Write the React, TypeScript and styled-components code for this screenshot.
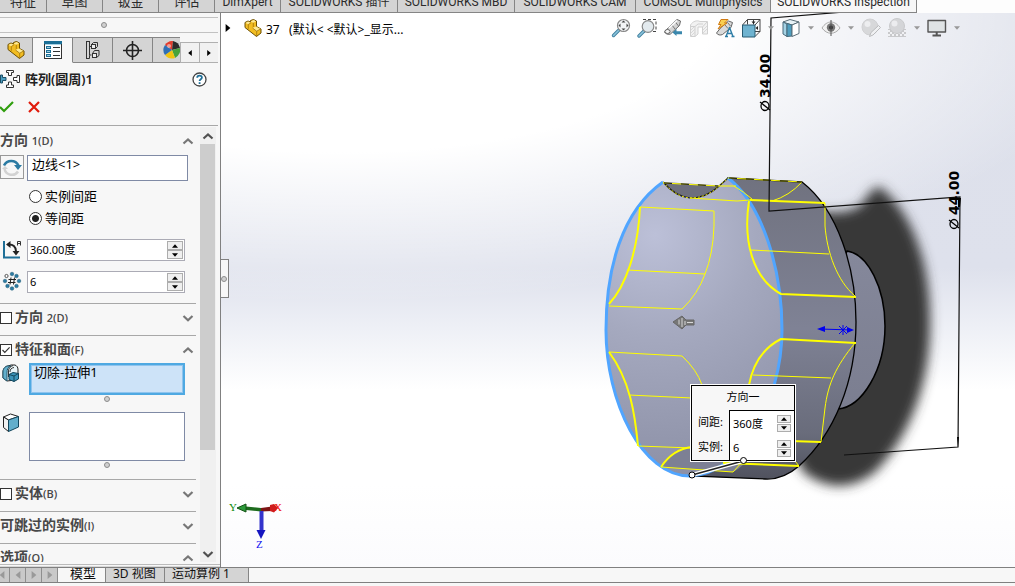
import React, { useState } from "react";
import styled, { createGlobalStyle, css } from "styled-components";

const GlobalStyle = createGlobalStyle`
  *, *::before, *::after { box-sizing: border-box; }
  body {
    margin: 0;
    background: #f7f7f7;
    color: #1a1a1a;
    font-family: "Noto Sans", "Noto Sans CJK SC", sans-serif;
    font-size: 13px;
  }
  button, input { font: inherit; color: inherit; }
  button { margin: 0; padding: 0; border: 0; background: none; cursor: pointer; }
  ul { margin: 0; padding: 0; list-style: none; }
`;

const Shell = styled.div`
  display: flex;
  flex-direction: column;
  height: 100vh;
  overflow: hidden;
`;

/* ---------- command manager tabs ---------- */

const CommandTabs = styled.nav`
  position: relative;
  z-index: 2;
  display: flex;
  align-items: flex-end;
  flex: none;
  height: 13px;
  overflow: hidden;
  background: #fdfdfd;
`;

const CommandTab = styled.button<{ $width: number; $active?: boolean }>`
  flex: none;
  width: ${(p) => p.$width}px;
  height: 22px;
  border-right: 1px solid #858585;
  border-bottom: 1px solid #858585;
  background: ${(p) => (p.$active ? "#f7f7f7" : "#d4d4d4")};
  color: #2b2b2b;
  font-family: Roboto, "Noto Sans CJK SC", sans-serif;
  font-size: ${(p) => (p.$width < 60 ? 13 : 12)}px;
  line-height: 20px;
  white-space: nowrap;
`;

const Workspace = styled.div`
  display: flex;
  flex: 1;
  min-height: 0;
`;

/* ---------- property manager ---------- */

const Panel = styled.aside`
  display: flex;
  flex-direction: column;
  flex: none;
  width: 221px;
  border-right: 1px solid #808080;
  background: #f7f7f7;
`;

const PanelGrip = styled.div`
  display: flex;
  align-items: center;
  justify-content: center;
  flex: none;
  height: 16px;
  margin: 4px 2px 4px 0;
  padding-right: 10px;
  border-top: 1px solid #c2c2c2;
  border-bottom: 1px solid #c2c2c2;
`;

const Dot = styled.span`
  display: block;
  width: 6px;
  height: 6px;
  border: 1px solid #8c8c8c;
  border-radius: 50%;
  background: #d0d0d0;
`;

const PanelTabs = styled.div`
  display: flex;
  flex: none;
  height: 26px;
  margin-right: 2px;
  overflow: hidden;
`;

const PanelTab = styled.button<{ $active?: boolean; $width?: number }>`
  display: flex;
  align-items: center;
  justify-content: center;
  flex: none;
  width: ${(p) => p.$width ?? 40}px;
  border: solid #858585;
  border-width: 1px 1px 1px 0;
  background: #d4d4d4;
  ${(p) =>
    p.$active &&
    css`
      border-bottom-color: #f7f7f7;
      background: #f7f7f7;
    `}
`;

const CoveredTab = styled(PanelTab)`
  justify-content: flex-start;
  padding-left: 10px;
  border-right: 0;
  overflow: hidden;

  svg { flex: none; }
`;

const TabScroll = styled.div`
  display: flex;
  flex: 1;
  align-self: flex-end;
  height: 21px;
  border-top: 1px solid #b0b0b0;
`;

const TabScrollButton = styled.button`
  display: flex;
  align-items: center;
  justify-content: center;
  flex: 1;
  border: solid #b0b0b0;
  border-width: 0 0 1px 1px;
  background: #f1f1f1;
`;

const FeatureHeader = styled.header`
  display: flex;
  align-items: center;
  flex: none;
  height: 32px;
  padding-right: 13px;
`;

const FeatureTitle = styled.h1`
  flex: 1;
  margin: 0;
  padding-left: 5px;
  color: #222;
  font-size: 13px;
  font-weight: 600;
  line-height: 18px;
`;

const HelpButton = styled.button`
  display: flex;
`;

const ConfirmRow = styled.div`
  display: flex;
  align-items: center;
  flex: none;
  gap: 14px;
  height: 31px;
  padding-bottom: 6px;
  margin-right: 2px;
  border-bottom: 1px solid #a8a8a8;

  button { display: flex; }
`;

const PanelBody = styled.div`
  display: flex;
  flex: 1;
  gap: 4px;
  min-height: 0;
  padding: 1px 4px 0 0;
`;

const Sections = styled.div`
  display: flex;
  flex-direction: column;
  width: 196px;
  overflow: hidden;
`;

const Section = styled.section<{ $pad: number; $first?: boolean }>`
  flex: none;
  padding-bottom: ${(p) => p.$pad}px;
  border-top: ${(p) => (p.$first ? "0" : "1px solid #a8a8a8")};
`;

const SectionHead = styled.div`
  display: flex;
  align-items: center;
  height: 27px;
  padding-right: 2px;
`;

const SectionLabel = styled.label`
  display: flex;
  align-items: center;
  flex: 1;
  gap: 3px;
  color: #484848;
  font-size: 14px;
  font-weight: 600;
  line-height: 20px;
  white-space: pre;

  small {
    font-family: "Open Sans", sans-serif;
    font-size: 11px;
    font-weight: 600;
  }
`;

const ToggleButton = styled.button`
  display: flex;
`;

const CheckBox = styled.input`
  flex: none;
  width: 12px;
  height: 12px;
  margin: 0;
  appearance: none;
  border: 1px solid #333;
  background: #fff;

  &:checked {
    background: #fff
      url("data:image/svg+xml,%3Csvg xmlns='http://www.w3.org/2000/svg' viewBox='0 0 10 10'%3E%3Cpath d='M1.5 5l2.3 2.4L8.6 2.4' fill='none' stroke='%23333' stroke-width='1.2'/%3E%3C/svg%3E")
      center / 10px no-repeat;
  }
`;

const FieldRow = styled.div<{ $top?: number }>`
  display: flex;
  align-items: flex-start;
  margin-top: ${(p) => p.$top ?? 0}px;
`;

const RowIcon = styled.div<{ $width: number }>`
  flex: none;
  width: ${(p) => p.$width}px;
  padding-left: 2px;
  line-height: 0;
`;

const ReverseButton = styled.button`
  flex: none;
  width: 24px;
  height: 24px;
  margin-right: 3px;
  border: 1px solid #999;
  line-height: 0;
`;

const SelectionBox = styled.ul<{ $width: number; $height: number; $active?: boolean }>`
  width: ${(p) => p.$width}px;
  height: ${(p) => p.$height}px;
  padding: 0 4px;
  border: 1px solid #7f8aa5;
  background: #fff;
  color: #000;
  line-height: 16px;
  ${(p) =>
    p.$active &&
    css`
      padding: 0 3px;
      border: 2px solid #4fa9e2;
      background: #cde3f8;
      box-shadow: inset 0 0 0 1px #8fc4ee;
      line-height: 14px;
    `}
`;

const RadioLabel = styled.label`
  display: flex;
  align-items: center;
  gap: 3px;
  height: 22px;
  padding-left: 29px;
  color: #000;
  line-height: 20px;
`;

const Radio = styled.input`
  width: 13px;
  height: 13px;
  margin: 0;
  appearance: none;
  border: 1px solid #333;
  border-radius: 50%;
  background: #fff;

  &:checked { background: radial-gradient(circle, #222 0 3px, #fff 4px); }
`;

const SpinFrame = styled.div`
  display: flex;
  width: 158px;
  height: 22px;
  padding: 1px;
  border: 1px solid #ababb5;
  background: #fff;
`;

const SpinInput = styled.input`
  flex: 1;
  width: 0;
  min-width: 0;
  padding: 0 0 2px 1px;
  border: 0;
  outline: 0;
  background: none;
  color: #000;
  font-size: 11px;
`;

const SpinButtons = styled.span<{ $small?: boolean }>`
  display: flex;
  flex-direction: column;
  gap: ${(p) => (p.$small ? 1 : 0)}px;
  flex: none;
  width: ${(p) => (p.$small ? 14 : 16)}px;
`;

const SpinButton = styled.button`
  display: flex;
  align-items: center;
  justify-content: center;
  flex: 1;
  min-height: 0;
  border: 1px solid #adadad;
  background: #efefef;
`;

const BoxGrip = styled.div<{ $width: number }>`
  display: flex;
  justify-content: center;
  width: ${(p) => p.$width}px;
  padding-top: 1px;
`;

const ScrollBar = styled.div`
  display: flex;
  flex-direction: column;
  width: 16px;
  background: #f0f0f0;
`;

const ScrollArrow = styled.button`
  display: flex;
  align-items: center;
  justify-content: center;
  flex: none;
  height: 17px;
`;

const ScrollThumb = styled.div`
  flex: 306;
  width: 15px;
  background: #cdcdcd;
`;

const ScrollRest = styled.div`
  flex: 95;
`;

const PanelFoot = styled.div`
  flex: none;
  height: 3px;
  margin-top: 2px;
  border-top: 1px solid #bbb;
  border-bottom: 1px solid #d8d8d8;
`;

/* ---------- graphics area ---------- */

const Scene = styled.main`
  position: relative;
  flex: 1;
  min-width: 0;
  overflow: hidden;
  background:
    radial-gradient(ellipse 780px 290px at 15% 0, #fff 0, #fff 48%, rgba(255, 255, 255, 0) 100%),
    linear-gradient(to bottom, #dde0ea 0, #dee1ec 46%, #eef0f6 57%, #fff 68%, #fff 85%, #fbfbfd 100%);
`;

const Drawing = styled.svg`
  position: absolute;
  top: 0;
  left: 0;
  width: 794px;
  height: 554px;
  overflow: visible;
`;

const SceneBar = styled.div`
  position: relative;
  display: flex;
  justify-content: space-between;
  align-items: flex-start;
  padding: 4px 51px 0 3px;
`;

const FeatureTree = styled.button`
  display: flex;
  align-items: center;
  height: 22px;
  color: #000;
  font-size: 12px;
  white-space: pre;

  svg { flex: none; }
`;

const TreeArrow = styled.span`
  display: flex;
  width: 20px;
`;

const TreeText = styled.span`
  padding: 2px 0 0 4px;
`;

const ViewTools = styled.div`
  display: flex;
`;

const ViewTool = styled.button<{ $faded?: boolean }>`
  display: flex;
  align-items: center;
  justify-content: center;
  width: 26px;
  height: 22px;
  opacity: ${(p) => (p.$faded ? 0.45 : 1)};
`;

const ToolCaret = styled.button`
  display: flex;
  align-items: center;
  justify-content: center;
  width: 14px;
  height: 22px;
`;

const Splitter = styled.button`
  position: absolute;
  top: 246px;
  left: 0;
  display: flex;
  align-items: center;
  width: 8px;
  height: 39px;
  border: 1px solid #808080;
  border-left: 0;
  background: #f7f7f7;
`;

const Callout = styled.form`
  position: absolute;
  top: 371px;
  left: 469px;
  width: 106px;
  border: 1px solid #fff;
  background: #f7f7f7;
  color: #000;
  font-size: 11px;
`;

const CalloutInner = styled.div`
  border: 1px solid #000;
`;

const CalloutTitle = styled.h2`
  margin: 0;
  height: 24px;
  font-size: 11px;
  font-weight: 400;
  line-height: 22px;
  text-align: center;
`;

const CalloutGrid = styled.div`
  display: grid;
  grid-template-columns: 37px 1fr;
`;

const CalloutLabel = styled.label`
  padding-left: 6px;
  line-height: 24px;
`;

const CalloutField = styled.div`
  display: flex;
  height: 25px;
  padding: 5px 3px 3px 2px;
  border-left: 1px solid #000;
  background: #fff;

  &:nth-child(2) {
    padding-top: 4px;
    border-top: 1px solid #000;
  }
`;

const LeaderEnd = styled.span`
  position: absolute;
  left: 49px;
  bottom: -3px;
  width: 7px;
  height: 7px;
  border: 1px solid #000;
  border-radius: 50%;
  background: #fff;
`;

/* ---------- bottom tabs ---------- */

const BottomBar = styled.footer`
  display: flex;
  flex: none;
  height: 16px;
  margin-bottom: 3px;
  border-top: 1px solid #808080;
  border-bottom: 1px solid #808080;
  background: #f7f7f7;
`;

const NavGroup = styled.div`
  display: flex;
  justify-content: flex-end;
  width: 58px;
  overflow: hidden;
  background: #c9c9c9;
`;

const NavButton = styled.button`
  display: flex;
  align-items: center;
  justify-content: center;
  flex: none;
  width: 16px;
  border-right: 1px solid #8e8e8e;
`;

const SheetTab = styled.button<{ $width: number; $active?: boolean }>`
  width: ${(p) => p.$width}px;
  padding: 0 0 3px ${(p) => (p.$active ? 12 : 7)}px;
  overflow: hidden;
  border-right: 1px solid #858585;
  background: ${(p) => (p.$active ? "#f7f7f7" : "#d4d4d4")};
  color: #111;
  font-size: ${(p) => (p.$active ? 13 : 12)}px;
  line-height: 11px;
  text-align: left;
  white-space: nowrap;
`;

/* ---------- small glyphs ---------- */

const Tri = ({ dir, size = 6, color = "#000" }: { dir: "up" | "down" | "left" | "right"; size?: number; color?: string }) => {
  const d = { up: "M0 8L5 2l5 6z", down: "M0 2h10L5 8z", left: "M8 0v10L2 5z", right: "M2 0l6 5-6 5z" }[dir];
  return (
    <svg width={size} height={size} viewBox="0 0 10 10" aria-hidden="true">
      <path d={d} fill={color} />
    </svg>
  );
};

const Chevron = ({ up, color = "#777" }: { up?: boolean; color?: string }) => (
  <svg width="12" height="12" viewBox="0 0 12 12" aria-hidden="true">
    <path d={up ? "M1.500 8.500L6 4.500l4.500 4" : "M1.500 4L6 8.200 10.500 4"} fill="none" stroke={color} strokeWidth="2.200" />
  </svg>
);

const PartIcon = () => (
  <svg width="18" height="18" viewBox="0 0 18 18" strokeLinejoin="round" aria-hidden="true">
    <path d="M1 3.500L4 2l2.500 1V1.500L9.500.5l3 1.500v5.500L17 10v4l-4.500 3.500L1 8.500z" fill="#f2bd22" stroke="#6d4f00" />
    <path d="M6.500 2.500l3-1.500 2.700 1.200-2.900 1.500zM1.500 4L4 2.600l2.800 1.100-2.500 1.600zM8.500 9l3.500-1.500L16.500 10l-3.800 2.200z" fill="#fde994" />
    <path d="M4.300 5.500v4.300M9.300 3.800V8M12.700 12.300V17M4.300 5.500l2.500-1.500M8.500 9l4.200 3.200L16.500 10" fill="none" stroke="#a0740a" strokeWidth=".8" />
  </svg>
);

const ListIcon = () => (
  <svg width="18" height="18" viewBox="0 0 18 18" aria-hidden="true">
    <rect x=".5" y=".5" width="17" height="17" fill="#fff" stroke="#333" />
    <rect x="0" y="0" width="18" height="3" fill="#1c6f96" />
    <path d="M1 3.500h16" stroke="#a9d3e5" />
    {[6, 10, 14].map((y) => (
      <g key={y}>
        <rect x="2.500" y={y - 0.5} width="4" height="2" fill="#9ccbe0" stroke="#1c6f96" />
        <path d={`M9 ${y + 0.5}h7`} stroke="#333" />
      </g>
    ))}
  </svg>
);

const ConfigIcon = () => (
  <svg width="16" height="18" viewBox="0 0 16 18" fill="none" stroke="#333" aria-hidden="true">
    <path d="M1 .5h4M1.500 0v17.500M4.500 1v13.500M1 17.500h3.500v-3M4.500 5.500h2M4.500 14h2" />
    <rect x="6.500" y="3.500" width="4" height="4" fill="#eee" />
    <path d="M6.500 3.500l2-2h4v4l-2 2" />
    <rect x="7.500" y="12.500" width="4" height="4" fill="#eee" />
    <path d="M7.500 12.500l2-3h4.500v5l-2.500 2" />
  </svg>
);

const TargetIcon = () => (
  <svg width="19" height="19" viewBox="0 0 19 19" fill="none" stroke="#222" aria-hidden="true">
    <circle cx="9.500" cy="9.500" r="6" strokeWidth="1.600" />
    <path d="M9.500 0v19M0 9.500h19" strokeWidth="1.600" />
  </svg>
);

const BallIcon = () => (
  <svg width="18" height="18" viewBox="0 0 18 18" aria-hidden="true">
    <path d="M9 9L2 4A9 9 0 0 1 10 0z" fill="#e23c2c" />
    <path d="M9 9L10 0a9 9 0 0 1 7 7z" fill="#2b2b2b" />
    <path d="M9 9l8-2a9 9 0 0 1-5 10z" fill="#48a33a" />
    <path d="M9 9l3 8a9 9 0 0 1-10-3z" fill="#f1c40f" />
    <path d="M9 9l-7 5A9 9 0 0 1 2 4z" fill="#2f6fb5" />
    <circle cx="6" cy="5" r="2" fill="#fff" opacity=".5" />
  </svg>
);

const PatternIcon = () => (
  <svg width="20" height="20" viewBox="0 0 20 20" aria-hidden="true">
    <path d="M.5 6v8h2v-2.500h3.500v-3H2.500V6z" fill="#4c9dbf" stroke="#1d4f66" />
    <g fill="#fff" stroke="#333">
      <path d="M6.500 1.500h7v2h-2v3h-3v-3h-2z" />
      <path d="M6.500 18.500h7v-2.500h-2v-3h-3v3h-2z" />
      <path d="M19.500 6.500v7h-2.500v-2h-3.500v-3h3.500v-2z" />
    </g>
  </svg>
);

const HelpIcon = () => (
  <svg width="15" height="15" viewBox="0 0 15 15" aria-hidden="true">
    <circle cx="7.500" cy="7.500" r="6.500" fill="#fff" stroke="#444" strokeWidth="1.300" />
    <path d="M5.200 5.800c0-3 4.700-2.900 4.700-.3 0 1.700-2.300 1.700-2.300 3.500" fill="none" stroke="#1f6f97" strokeWidth="1.800" />
    <rect x="6.700" y="10.200" width="1.800" height="1.800" fill="#1f6f97" />
  </svg>
);

const ReverseIcon = () => (
  <svg width="22" height="22" viewBox="0 0 22 22" fill="none" aria-hidden="true">
    <path d="M3.500 13a7.500 7.500 0 0 0 13.500 2.500" stroke="#d2d2d2" strokeWidth="2.500" />
    <path d="M3 9.500a8 8 0 0 1 14.500 0" stroke="#2b7ba3" strokeWidth="2.500" />
    <path d="M13 9h8l-4 5z" fill="#2b7ba3" />
    <path d="M1 13h6l-3-3z" fill="#d2d2d2" />
  </svg>
);

const AngleIcon = () => (
  <svg width="20" height="22" viewBox="0 0 20 22" fill="none" aria-hidden="true">
    <path d="M2 2v16.500h16" stroke="#1f6f97" strokeWidth="2" />
    <path d="M6 5.500c5-.5 8 2 8 7" stroke="#222" strokeWidth="2" />
    <path d="M8.500 2L4 5.500 8.500 9zM10.500 12h7L14 16.500z" fill="#222" />
    <path d="M15.500 6.500V2.500h3v4M15.500 4.500h3" stroke="#333" />
  </svg>
);

const CountIcon = () => (
  <svg width="20" height="22" viewBox="0 0 20 22" aria-hidden="true">
    {[[10, 3], [14.5, 5], [17, 10], [14.5, 15], [10, 17.5], [5.5, 15], [3, 10]].map(([x, y]) => (
      <circle key={`${x}-${y}`} cx={x} cy={y} r="1.800" fill="#2b7ba3" stroke="#1c5875" strokeWidth=".5" />
    ))}
    <circle cx="4.500" cy="5" r="1.600" fill="#fff" stroke="#555" />
    <path d="M9 6.500l-1 7M12.500 6.500l-1 7M6.500 8.500h7.500M6 11.500h7.500" stroke="#222" fill="none" />
  </svg>
);

const FeatureIcon = () => (
  <svg width="18" height="20" viewBox="0 0 18 20" strokeLinejoin="round" aria-hidden="true">
    <path d="M1 15V9c0-4 3-6 5-6l3-1h4c2 1 3 2 3 5v6l-3 4-8 1z" fill="#eaf5f9" stroke="#222" />
    <path d="M1 15V9c0-4 3-6 5-6h3C6 4 5 6 5 10v8z" fill="#63aecb" stroke="#24586e" />
    <path d="M8 9c0-3 1.500-4 4-4.500M6.500 14V8c0-3 2-4.500 4.500-5.500" fill="none" stroke="#333" />
    <path d="M7 11.500l4-2 5.500 1v5.500l-4.500 2.500-5-2z" fill="#3c93b8" stroke="#12465c" />
    <path d="M7 11.500l5 1.500 4.500-2.500M12 13v5.500" fill="none" stroke="#12465c" />
  </svg>
);

const CubeIcon = () => (
  <svg width="18" height="20" viewBox="0 0 18 20" strokeLinejoin="round" aria-hidden="true">
    <path d="M1.500 5l7-3 8 2.500L6.500 8z" fill="#fff" stroke="#222" />
    <path d="M1.500 5v10.500l5 4V8z" fill="#f2f2f2" stroke="#222" />
    <path d="M6.500 8l10-3.500V15l-10 4.500z" fill="#63aecb" stroke="#12465c" />
  </svg>
);

/* ---------- view toolbar icons ---------- */

const ViewIcon = ({ children }: { children: React.ReactNode }) => (
  <svg width="20" height="20" viewBox="0 0 20 20" fill="none" strokeLinejoin="round" aria-hidden="true">
    {children}
  </svg>
);

const ZoomFitIcon = () => (
  <ViewIcon>
    <path d="M2.500 17.500l5-5" stroke="#3f7f9e" strokeWidth="3.400" strokeLinecap="round" />
    <path d="M2.500 17.500l5-5" stroke="#8cc4dc" strokeWidth="1.600" strokeLinecap="round" />
    <circle cx="12.500" cy="7.500" r="6" fill="#f3f5f7" stroke="#888" strokeWidth="1.200" />
    <path d="M12.500 2.500l2 2h-4zM12.500 12.500l2-2h-4zM7.500 7.500l2-2v4zM17.500 7.500l-2-2v4z" fill="#444" />
  </ViewIcon>
);

const ZoomAreaIcon = () => (
  <ViewIcon>
    <path d="M6 1.500h13v12h-3" stroke="#444" strokeDasharray="3 2" />
    <path d="M2 18l5-5" stroke="#3f7f9e" strokeWidth="3.400" strokeLinecap="round" />
    <path d="M2 18l5-5" stroke="#8cc4dc" strokeWidth="1.600" strokeLinecap="round" />
    <circle cx="11" cy="8.500" r="5.800" fill="#e3eaee" stroke="#888" strokeWidth="1.200" />
  </ViewIcon>
);

const PrevViewIcon = () => (
  <ViewIcon>
    <path d="M1.500 14l4-4.500 8.500-8 3.500 1.500-1 4.500-9 8.500c-2 1-5 0-6-2z" fill="#d4d4d4" stroke="#6b6b6b" />
    <path d="M8.500 6.500l3.500 4.500M12 3.500l3.500 4.500" stroke="#777" />
    <path d="M6 10l8-7.500" stroke="#fff" strokeWidth="1.500" />
    <ellipse cx="4.500" cy="13.500" rx="2.600" ry="2" fill="#f6f6f6" stroke="#666" />
    <path d="M9.500 14.500l4-3.500v2.200H19v3h-5.500V18z" fill="#3b88ad" />
  </ViewIcon>
);

const SectionViewIcon = () => (
  <ViewIcon>
    <path d="M1.500 7C4 3 8 2 11 3.500h7.500V16h-5V9H9v7l-3 2.500H1.500z" fill="#e4e4e4" stroke="#999" />
    <path d="M1.500 8.500H6L9 6h5M6 8.500v10M13.500 9l4.500-5" stroke="#999" />
    <path d="M2 12l3-3M2 15l4-4M2 18l4-4M14 12l4-4M14 15l4-4" stroke="#aaa" />
  </ViewIcon>
);

const DynamicIcon = () => (
  <ViewIcon>
    <path d="M1.500 15l4-5 8-7 4 1.500-1.500 5-8.500 7c-2 1-5 .5-6-1.500z" fill="#dadada" stroke="#666" />
    <path d="M10 7l3 3.500M12.500 4.500l3 3.500" stroke="#777" />
    <path d="M6 1.500h7L9.500 5h2.500l-9 6 3-4.500H3.500z" fill="#f9cf52" stroke="#cf7a12" />
    <path d="M11 18.500l3.500-9 3.500 9M12 15.500h5M10 18.500h3M16.500 18.500h3" stroke="#2d7da6" strokeWidth="1.400" />
  </ViewIcon>
);

const OrientIcon = () => (
  <ViewIcon>
    <path d="M1.500 7l5-5.500h12.500v12l-5 5M6.500 1.500v5M14 7l5-5.500M14 13.500h5M12.500 1.500v5" stroke="#444" />
    <rect x="1.500" y="7" width="12.500" height="12" fill="#6fb3d0" stroke="#285b73" />
    <path d="M12.500 6l-2-2.500h4zM14.500 10l2.500-2v4z" fill="#222" />
  </ViewIcon>
);

const StyleIcon = () => (
  <ViewIcon>
    <path d="M2 4l7-2.500L18 4l-7 3z" fill="#e8f3f7" stroke="#5b6f78" />
    <path d="M2 4v12l4 2.500V6z" fill="#a4d2e4" stroke="#47697a" />
    <path d="M6 5.500v13l5-.5V7z" fill="#4f9fbf" stroke="#47697a" />
    <path d="M11 7v11.500l7-3V4z" fill="#fff" stroke="#5b6f78" />
  </ViewIcon>
);

const EyeIcon = () => (
  <ViewIcon>
    <path d="M1 10c5-8 13-8 18 0-5 7-13 7-18 0z" fill="#f1f1f1" stroke="#aaa" />
    <circle cx="10" cy="9.500" r="4.200" fill="#777" />
    <circle cx="10" cy="9.500" r="2" fill="#333" />
    <path d="M10 2v16" stroke="#555" />
  </ViewIcon>
);

const AppearanceIcon = () => (
  <ViewIcon>
    <circle cx="9" cy="9" r="8" fill="#b8b8b8" stroke="#a5a5a5" />
    <circle cx="6.500" cy="6" r="3" fill="#e8e8e8" />
    <path d="M8.500 18.500l1.500-4 7.500-7 2 2-7.500 7.500z" fill="#eee" stroke="#777" />
  </ViewIcon>
);

const BackdropIcon = () => (
  <ViewIcon>
    <path d="M1 11h18v8H1z" fill="#999" />
    <path d="M1 13h18M1 17h18" stroke="#f4f4f4" strokeWidth="2" strokeDasharray="2 2" />
    <path d="M3 15h16" stroke="#f4f4f4" strokeWidth="2" strokeDasharray="2 2" />
    <circle cx="10" cy="8" r="7.500" fill="#b5b5b5" stroke="#999" />
    <circle cx="7.500" cy="5.500" r="3" fill="#e8e8e8" />
  </ViewIcon>
);

const MonitorIcon = () => (
  <ViewIcon>
    <rect x="1" y="2.500" width="17.500" height="11.500" fill="#dfe3e5" stroke="#555" strokeWidth="1.400" />
    <path d="M9.700 14v3M5.500 17.500h8.500" stroke="#555" strokeWidth="2" />
  </ViewIcon>
);

/* ---------- 3D model with dimensions ---------- */

const FRONT_EDGE =
  "M663 182C622 211 606 268 606 330C606 402 642 476 690 476C740 475 782 402 782 330C782 268 762 204 728 178";
const NOTCH = "M663 182Q676 197 690 198Q706 198 718 187L728 178";

const ModelDrawing = () => (
  <Drawing viewBox="221 13 794 554" role="img" aria-label="37">
    <defs>
      <radialGradient id="front" gradientUnits="userSpaceOnUse" cx="655" cy="235" r="250">
        <stop offset="0" stopColor="#bcc0d8" />
        <stop offset=".4" stopColor="#a5a9bf" />
        <stop offset="1" stopColor="#8b8fa5" />
      </radialGradient>
      <linearGradient id="rim" x1="0" y1="0" x2="0" y2="1">
        <stop offset="0" stopColor="#70727f" />
        <stop offset=".5" stopColor="#7f8295" />
        <stop offset=".85" stopColor="#696c7b" />
        <stop offset="1" stopColor="#50525e" />
      </linearGradient>
      <linearGradient id="hub" x1="0" y1="0" x2="0" y2="1">
        <stop offset="0" stopColor="#85889b" />
        <stop offset="1" stopColor="#7b7e90" />
      </linearGradient>
      <filter id="soft" x="-20%" y="-20%" width="140%" height="140%">
        <feGaussianBlur stdDeviation="6" />
      </filter>
    </defs>

    <path
      d="M790 205C815 212 845 218 862 204Q873 186 880 187C912 212 930 262 930 320C931 385 908 440 874 473Q838 499 803 472L770 400Z"
      fill="#373738"
      filter="url(#soft)"
    />

    <path d="M847 251C868 254 885 288 885 326C885 370 862 407 838 409L820 330Z" fill="url(#hub)" stroke="#000" strokeWidth="1.500" />
    <path
      d="M728 178L802 182C838 210 856 268 856 322C856 382 834 434 799 466Q783 480 765 479L690 476L740 330Z"
      fill="url(#rim)"
      stroke="#000"
      strokeWidth="1.300"
    />
    <path d="M663 182L728 186L718 200H675Z" fill="#6d6f7d" />
    <path d={`${FRONT_EDGE}Q722 182 718 187C704 201 681 204 663 182Z`} fill="url(#front)" />
    <path d="M661 467Q672 448 690 447H760Q742 468 733 472Z" fill="#7d8094" />
    <path d={NOTCH} fill="none" stroke="#111" strokeWidth="1.200" />
    <path d={FRONT_EDGE} fill="none" stroke="#50a5ff" strokeWidth="3" />

    <g fill="none" stroke="#ff0" strokeWidth="1">
      <path d={NOTCH} strokeDasharray="2 2" />
      <path d="M663 183L718 186L736 186M728 178L802 182" />
      <path d="M690 198L737 201L750 200M734 186Q744 192 752 199M802 182Q789 196 772 201" />
      <path d="M640 207L714 211V226Q713 254 705 274Q698 294 682 309L609 306M627 270L705 274" />
      <path d="M751 250L829 254M825 203V226C827 252 837 281 855 296" />
      <path d="M609 352L682 356Q697 370 702 385M629 395L692 398M638 446L692 448" />
      <path d="M753 375L831 378M855 343C836 366 828 384 825 408L821 442" />
      <path d="M661 467L733 472L743 461M795 461L799 466" />
    </g>
    <path d="M664 183L718 186M729 178L802 182" fill="none" stroke="#111" strokeDasharray="8 9" />
    <g fill="none" stroke="#ff0" strokeWidth="2">
      <path d="M640 207C638 250 626 286 609 304M609 352C630 380 635 414 638 446" />
      <path d="M750 200L825 203M749 201C743 240 752 278 781 294L856 297" />
      <path d="M749 385C753 364 763 348 781 339L856 343" />
      <path d="M661 467Q673 449 692 447M790 441L821 442M723 463L799 466" />
    </g>

    <path d="M844 12L771 18L769 211L960 197L958 447L844 455" fill="none" stroke="#111" strokeWidth="1.200" />
    <path d="M958 198h3l-1 9h-2zM957 437h2l-1 10z" />
    <g stroke="#0000f0" fill="#0000f0">
      <path d="M820 329L852 330M839 326l8 8M839 334l8-8M843 325v10" fill="none" />
      <path d="M817 329l8-3v6zM854 330l-7-3v6z" stroke="none" />
    </g>
    <path d="M673 322l9-6 4 4h8v5h-8l-4 4z" fill="#777" stroke="#666" />
    <path d="M679 319.500v5M682 318v9M685 321v4M687 322.500h6" stroke="#d8d8d8" />

    <g fontFamily="DejaVu Sans, sans-serif" fontSize="14" fontWeight="700" fill="#000">
      <text transform="translate(770 98) rotate(-90)">34.00</text>
      <text transform="translate(959 215) rotate(-90)">44.00</text>
    </g>
    <g fill="none" stroke="#000" strokeWidth="1.300">
      <ellipse cx="765" cy="106" rx="4" ry="4.500" />
      <path d="M760 102l10 8" />
      <ellipse cx="954" cy="224" rx="4" ry="4.500" />
      <path d="M949 220l10 8" />
    </g>

    <path d="M692 475L743 461" stroke="#fff" strokeWidth="4" />
    <path d="M692 475L743 461" stroke="#222" strokeWidth="1.500" />
    <circle cx="692" cy="475" r="3" fill="#fff" stroke="#000" />

    <path d="M246 506.500l15 1.500v3.500l-15-1.500z" fill="#1d6b1d" />
    <path d="M237 508l9-4v8z" fill="#2c9a3a" stroke="#145214" />
    <path d="M261 508l11-1.500v4.500l-11 .5z" fill="#7d1414" />
    <path d="M270 505l4-1 4 4-4 4.500-4-1.500z" fill="#cf1d1d" />
    <path d="M259.500 511h4v20h-4z" fill="#3434cc" />
    <path d="M256.500 530h9l-4.500 9z" fill="#1515c0" />
    <g fontFamily="Liberation Serif, serif" fontSize="11">
      <text x="229" y="511" fill="#0a8a0a" stroke="none">Y</text>
      <text x="274" y="511" fill="#f01010">X</text>
      <text x="256" y="548" fill="#1010f0">Z</text>
    </g>
  </Drawing>
);

/* ---------- composed controls ---------- */

const Steppers = ({ name, small }: { name: string; small?: boolean }) => (
  <SpinButtons $small={small}>
    <SpinButton type="button" aria-label={`${name} +`}><Tri dir="up" /></SpinButton>
    <SpinButton type="button" aria-label={`${name} −`}><Tri dir="down" /></SpinButton>
  </SpinButtons>
);

const SpinBox = ({ name, initial }: { name: string; initial: string }) => {
  const [value, setValue] = useState(initial);
  return (
    <SpinFrame>
      <SpinInput aria-label={name} value={value} onChange={(e) => setValue(e.target.value)} />
      <Steppers name={name} />
    </SpinFrame>
  );
};

const SectionToggle = ({ name, open }: { name: string; open?: boolean }) => (
  <ToggleButton type="button" aria-label={name} aria-expanded={!!open}>
    <Chevron up={open} />
  </ToggleButton>
);

const COMMANDS: [string, number][] = [
  ["特征", 47], ["草图", 56], ["钣金", 56], ["评估", 56], ["DimXpert", 66],
  ["SOLIDWORKS 插件", 117], ["SOLIDWORKS MBD", 117], ["SOLIDWORKS CAM", 121],
  ["COMSOL Multiphysics", 135], ["SOLIDWORKS Inspection", 146],
];

export default function App() {
  const [spacing, setSpacing] = useState("equal");
  return (
    <Shell>
      <GlobalStyle />
      <CommandTabs>
        {COMMANDS.map(([name, width], i) => (
          <CommandTab key={name} type="button" $width={width} $active={i === COMMANDS.length - 1}>{name}</CommandTab>
        ))}
      </CommandTabs>

      <Workspace>
        <Panel>
          <PanelGrip><Dot /></PanelGrip>
          <PanelTabs>
            <PanelTab type="button" aria-label="FeatureManager" $width={33}><PartIcon /></PanelTab>
            <PanelTab type="button" aria-label="PropertyManager" $active><ListIcon /></PanelTab>
            <PanelTab type="button" aria-label="ConfigurationManager"><ConfigIcon /></PanelTab>
            <PanelTab type="button" aria-label="DimXpertManager"><TargetIcon /></PanelTab>
            <CoveredTab type="button" aria-label="DisplayManager" $width={27}><BallIcon /></CoveredTab>
            <TabScroll>
              <TabScrollButton type="button" aria-label="Previous"><Tri dir="left" /></TabScrollButton>
              <TabScrollButton type="button" aria-label="Next"><Tri dir="right" /></TabScrollButton>
            </TabScroll>
          </PanelTabs>

          <FeatureHeader>
            <PatternIcon />
            <FeatureTitle>阵列(圆周)1</FeatureTitle>
            <HelpButton type="button" aria-label="Help"><HelpIcon /></HelpButton>
          </FeatureHeader>
          <ConfirmRow>
            <button type="button" aria-label="OK">
              <svg width="14" height="12" viewBox="0 0 14 12"><path d="M0 6l4 4 9-9" fill="none" stroke="#2f9e0e" strokeWidth="2.200" /></svg>
            </button>
            <button type="button" aria-label="Cancel">
              <svg width="12" height="12" viewBox="0 0 12 12"><path d="M1 1l10 10M11 1L1 11" fill="none" stroke="#e01b0c" strokeWidth="2.200" /></svg>
            </button>
          </ConfirmRow>

          <PanelBody>
            <Sections>
              <Section $first $pad={10}>
                <SectionHead>
                  <SectionLabel as="span"><span>方向 <small>1(D)</small></span></SectionLabel>
                  <SectionToggle name="方向 1" open />
                </SectionHead>
                <FieldRow $top={1}>
                  <ReverseButton type="button" aria-label="反向"><ReverseIcon /></ReverseButton>
                  <SelectionBox $width={161} $height={26}><li>边线&lt;1&gt;</li></SelectionBox>
                </FieldRow>
                <FieldRow $top={4}>
                  <RadioLabel>
                    <Radio type="radio" name="spacing" checked={spacing === "instance"} onChange={() => setSpacing("instance")} />
                    实例间距
                  </RadioLabel>
                </FieldRow>
                <FieldRow>
                  <RadioLabel>
                    <Radio type="radio" name="spacing" checked={spacing === "equal"} onChange={() => setSpacing("equal")} />
                    等间距
                  </RadioLabel>
                </FieldRow>
                <FieldRow $top={10}>
                  <RowIcon $width={27}><AngleIcon /></RowIcon>
                  <SpinBox name="角度" initial="360.00度" />
                </FieldRow>
                <FieldRow $top={10}>
                  <RowIcon $width={27}><CountIcon /></RowIcon>
                  <SpinBox name="实例数" initial="6" />
                </FieldRow>
              </Section>

              <Section $pad={4}>
                <SectionHead>
                  <SectionLabel><CheckBox type="checkbox" /><span>方向 <small>2(D)</small></span></SectionLabel>
                  <SectionToggle name="方向 2" />
                </SectionHead>
              </Section>

              <Section $pad={11}>
                <SectionHead>
                  <SectionLabel><CheckBox type="checkbox" defaultChecked /><span>特征和面<small>(F)</small></span></SectionLabel>
                  <SectionToggle name="特征和面" open />
                </SectionHead>
                <FieldRow>
                  <RowIcon $width={29}><FeatureIcon /></RowIcon>
                  <div>
                    <SelectionBox $width={156} $height={32} $active><li>切除-拉伸1</li></SelectionBox>
                    <BoxGrip $width={156}><Dot /></BoxGrip>
                  </div>
                </FieldRow>
                <FieldRow $top={10}>
                  <RowIcon $width={29}><CubeIcon /></RowIcon>
                  <div>
                    <SelectionBox $width={156} $height={49} />
                    <BoxGrip $width={156}><Dot /></BoxGrip>
                  </div>
                </FieldRow>
              </Section>

              <Section $pad={4}>
                <SectionHead>
                  <SectionLabel><CheckBox type="checkbox" /><span>实体<small>(B)</small></span></SectionLabel>
                  <SectionToggle name="实体" />
                </SectionHead>
              </Section>
              <Section $pad={4}>
                <SectionHead>
                  <SectionLabel as="span"><span>可跳过的实例<small>(I)</small></span></SectionLabel>
                  <SectionToggle name="可跳过的实例" />
                </SectionHead>
              </Section>
              <Section $pad={4}>
                <SectionHead>
                  <SectionLabel as="span"><span>选项<small>(O)</small></span></SectionLabel>
                  <SectionToggle name="选项" open />
                </SectionHead>
              </Section>
            </Sections>

            <ScrollBar>
              <ScrollArrow type="button" aria-label="Scroll up"><Chevron up color="#505050" /></ScrollArrow>
              <ScrollThumb />
              <ScrollRest />
              <ScrollArrow type="button" aria-label="Scroll down"><Chevron color="#505050" /></ScrollArrow>
            </ScrollBar>
          </PanelBody>
          <PanelFoot />
        </Panel>

        <Scene>
          <ModelDrawing />
          <SceneBar>
            <FeatureTree type="button">
              <TreeArrow><Tri dir="right" size={8} /></TreeArrow>
              <PartIcon />
              <TreeText>37   (默认&lt; &lt;默认&gt;_显示...</TreeText>
            </FeatureTree>
            <ViewTools>
              <ViewTool type="button" aria-label="Zoom to fit"><ZoomFitIcon /></ViewTool>
              <ViewTool type="button" aria-label="Zoom to area"><ZoomAreaIcon /></ViewTool>
              <ViewTool type="button" aria-label="Previous view"><PrevViewIcon /></ViewTool>
              <ViewTool type="button" aria-label="Section view" $faded><SectionViewIcon /></ViewTool>
              <ViewTool type="button" aria-label="Dynamic annotation views"><DynamicIcon /></ViewTool>
              <ViewTool type="button" aria-label="View orientation"><OrientIcon /></ViewTool>
              <ToolCaret type="button" aria-label="View orientation menu"><Tri dir="down" color="#999" /></ToolCaret>
              <ViewTool type="button" aria-label="Display style"><StyleIcon /></ViewTool>
              <ToolCaret type="button" aria-label="Display style menu"><Tri dir="down" color="#999" /></ToolCaret>
              <ViewTool type="button" aria-label="Hide/show items"><EyeIcon /></ViewTool>
              <ToolCaret type="button" aria-label="Hide/show menu"><Tri dir="down" color="#999" /></ToolCaret>
              <ViewTool type="button" aria-label="Edit appearance" $faded><AppearanceIcon /></ViewTool>
              <ViewTool type="button" aria-label="Apply scene" $faded><BackdropIcon /></ViewTool>
              <ToolCaret type="button" aria-label="Apply scene menu"><Tri dir="down" color="#999" /></ToolCaret>
              <ViewTool type="button" aria-label="View settings"><MonitorIcon /></ViewTool>
              <ToolCaret type="button" aria-label="View settings menu"><Tri dir="down" color="#999" /></ToolCaret>
            </ViewTools>
          </SceneBar>
          <Splitter type="button" aria-label="Collapse panel"><Dot /></Splitter>
          <Callout>
            <CalloutInner>
              <CalloutTitle>方向一</CalloutTitle>
              <CalloutGrid>
                <CalloutLabel htmlFor="callout-angle">间距:</CalloutLabel>
                <CalloutField>
                  <SpinInput id="callout-angle" defaultValue="360度" />
                  <Steppers name="间距" small />
                </CalloutField>
                <CalloutLabel htmlFor="callout-count">实例:</CalloutLabel>
                <CalloutField>
                  <SpinInput id="callout-count" defaultValue="6" />
                  <Steppers name="实例" small />
                </CalloutField>
              </CalloutGrid>
            </CalloutInner>
            <LeaderEnd />
          </Callout>
        </Scene>
      </Workspace>

      <BottomBar>
        <NavGroup>
          <NavButton type="button" aria-label="First"><Tri dir="left" size={8} color="#999" /></NavButton>
          <NavButton type="button" aria-label="Previous"><Tri dir="left" size={8} color="#999" /></NavButton>
          <NavButton type="button" aria-label="Next"><Tri dir="right" size={8} color="#999" /></NavButton>
          <NavButton type="button" aria-label="Last"><Tri dir="right" size={8} color="#999" /></NavButton>
        </NavGroup>
        <SheetTab type="button" $width={48} $active>模型</SheetTab>
        <SheetTab type="button" $width={59}>3D 视图</SheetTab>
        <SheetTab type="button" $width={84}>运动算例 1</SheetTab>
      </BottomBar>
    </Shell>
  );
}
